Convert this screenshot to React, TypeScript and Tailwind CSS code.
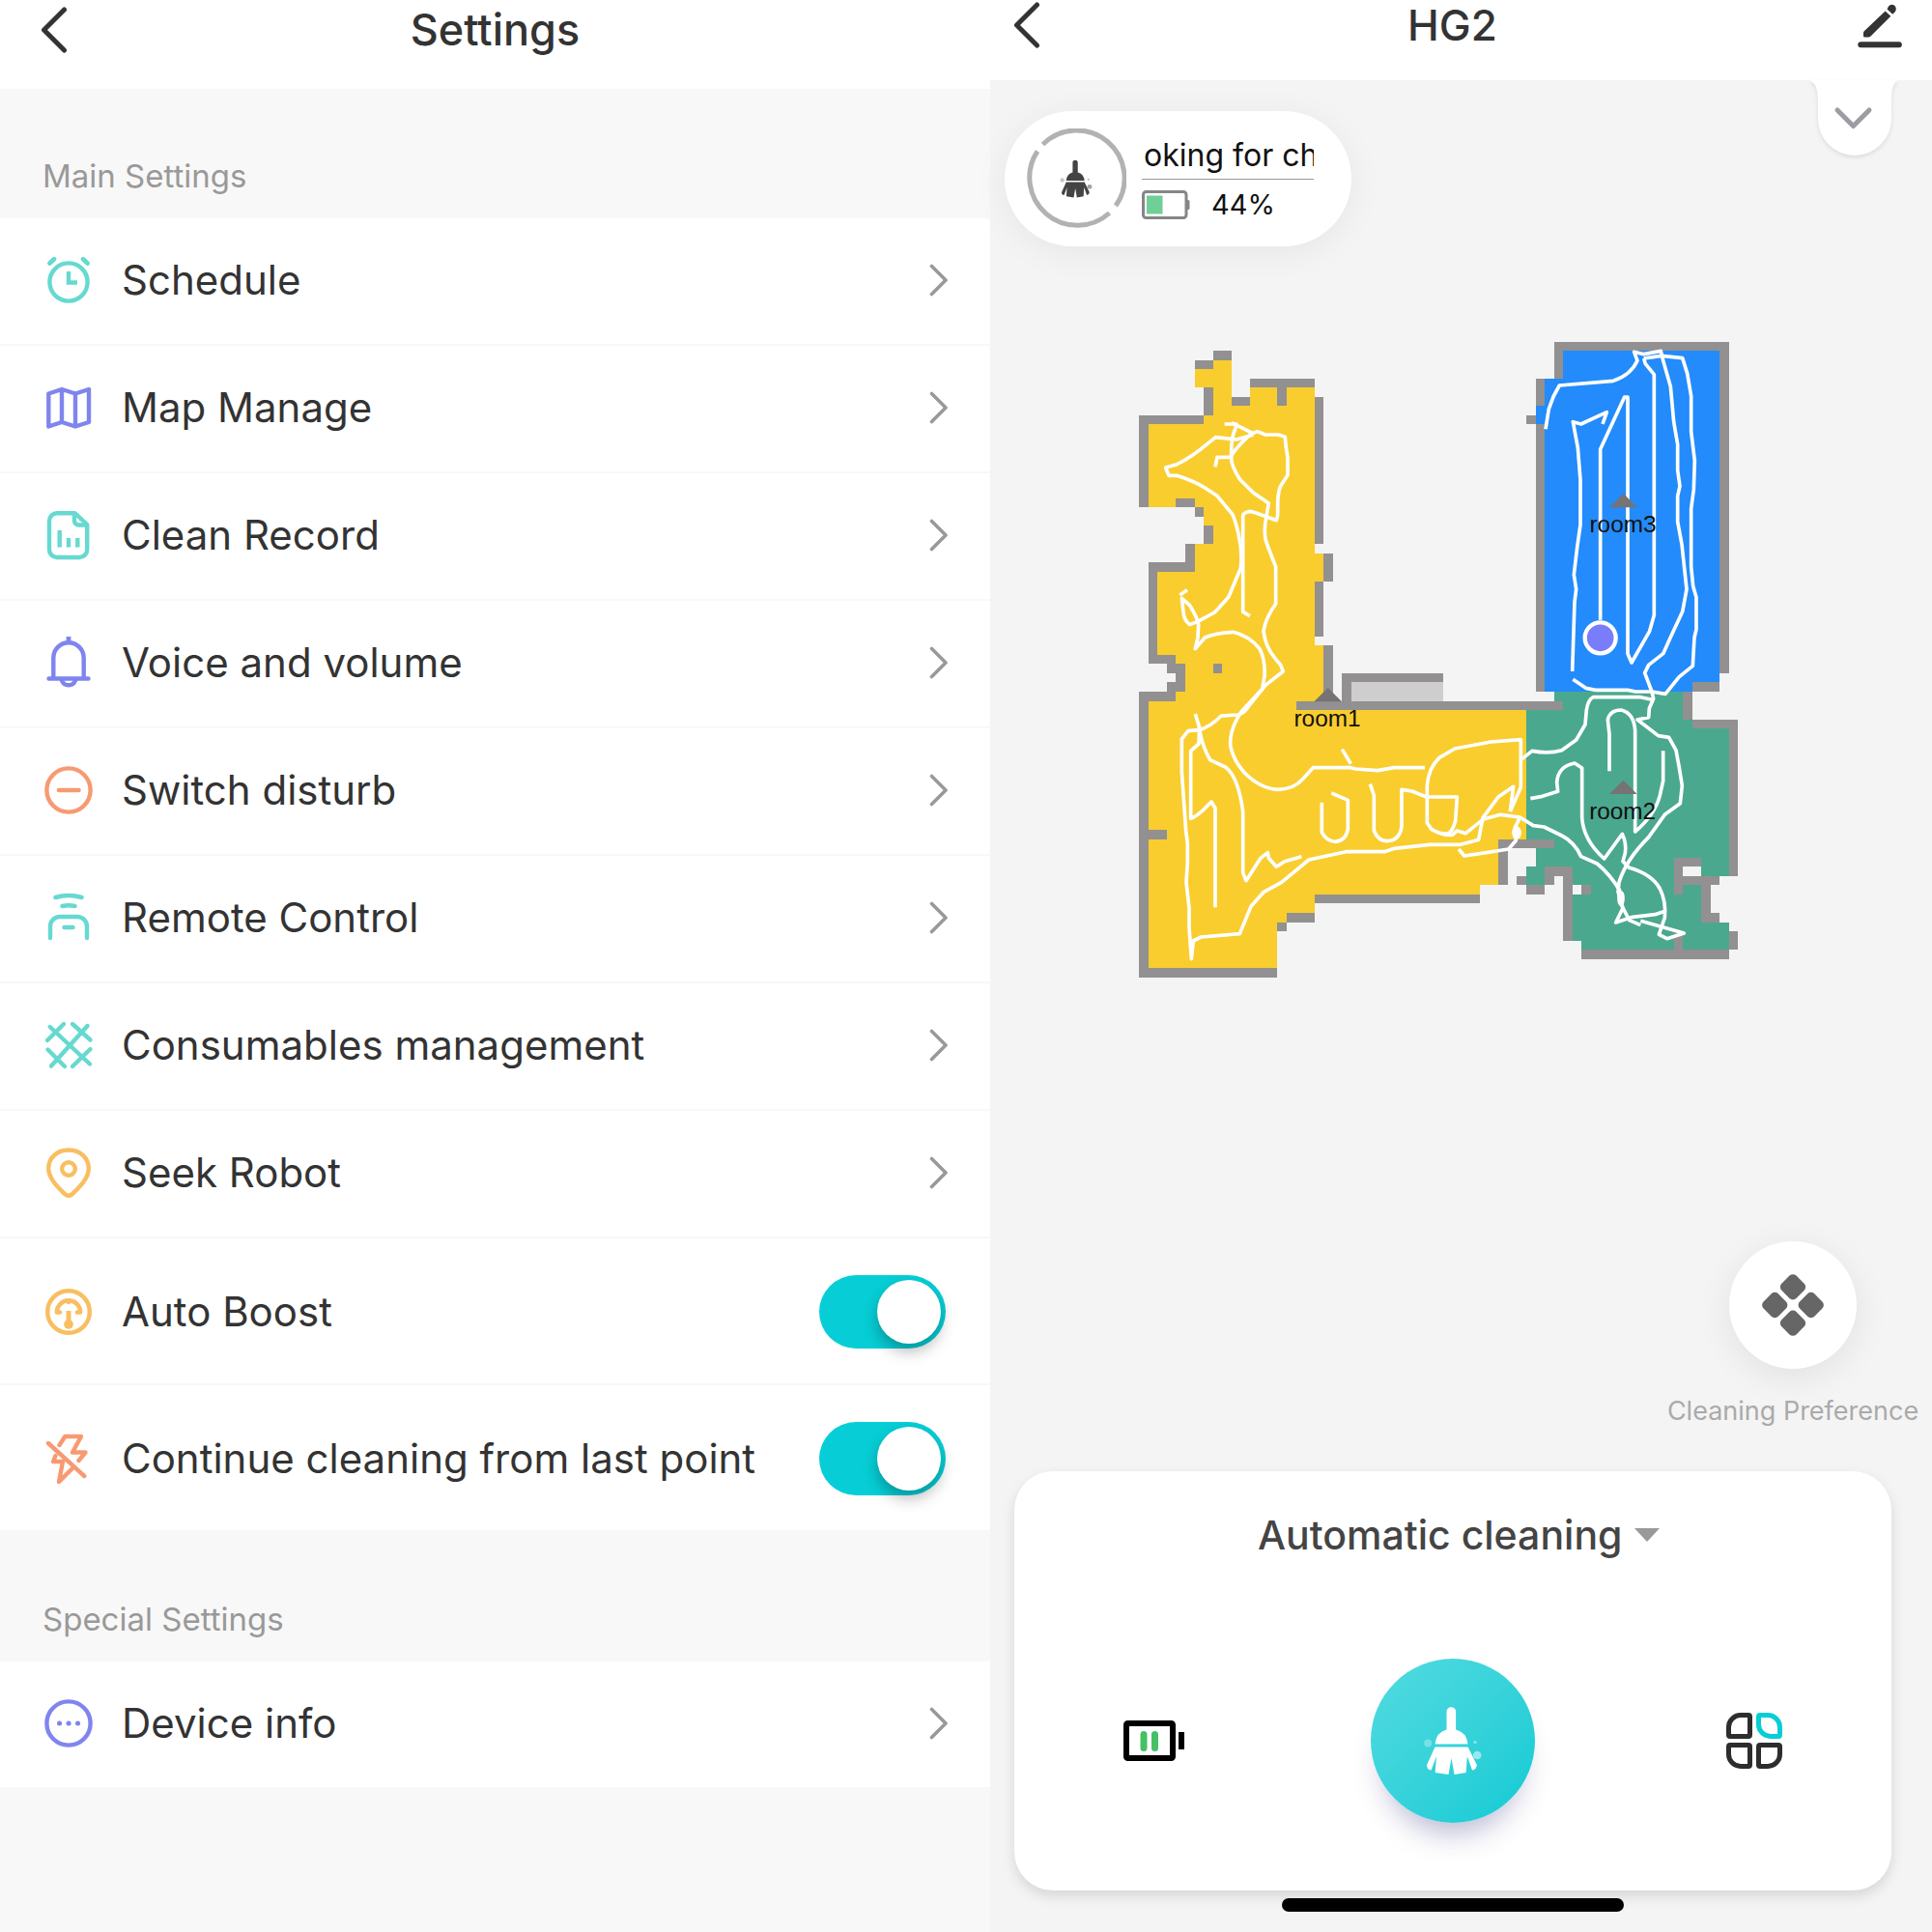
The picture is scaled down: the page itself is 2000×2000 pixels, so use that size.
import { useState, type ReactNode } from "react";

const TEAL = "#66d9d0";
const PURPLE = "#7f85ee";
const ORANGE = "#f79a72";
const AMBER = "#f8be60";

function RowIcon({ color, children }: { color: string; children: ReactNode }) {
  return (
    <svg
      viewBox="0 0 50 50"
      className="h-[50px] w-[50px] shrink-0 overflow-visible"
      fill="none"
      stroke={color}
      strokeWidth="4.4"
      strokeLinecap="round"
      strokeLinejoin="round"
      aria-hidden="true"
    >
      {children}
    </svg>
  );
}

const links = [
  {
    label: "Schedule",
    icon: (
      <RowIcon color={TEAL}>
        <circle cx="25" cy="27" r="19.6" />
        <path d="M5.5 7.5L10 3.2M40 3.2L44.5 7.5" strokeWidth="4.8" />
        <path d="M25 16V27.5H34" strokeLinecap="butt" strokeLinejoin="miter" />
      </RowIcon>
    ),
  },
  {
    label: "Map Manage",
    icon: (
      <RowIcon color={PURPLE}>
        <path d="M4.3 10.5L18 6L32 10.5L46 6V40L32 44.5L18 40L4.3 44.5ZM18 6V40M32 10.5V44.5" />
      </RowIcon>
    ),
  },
  {
    label: "Clean Record",
    icon: (
      <RowIcon color={TEAL}>
        <path d="M13 2.2H31.5L44.2 14V40a8 8 0 0 1-8 8H13a8 8 0 0 1-8-8V10.2a8 8 0 0 1 8-8Z" />
        <path d="M31 3V10a4.500 4.500 0 0 0 4.500 4.500H43.5" />
        <path d="M15.700 20V37.500M25 28V37.500M34.300 28V37.500" strokeLinecap="butt" />
      </RowIcon>
    ),
  },
  {
    label: "Voice and volume",
    icon: (
      <RowIcon color={PURPLE}>
        <path d="M9.3 41V20a15.7 15.7 0 0 1 31.4 0V41M4.5 41.5H45.5M18 43.5a7.5 7.5 0 0 0 14 0" />
        <path d="M25 -2V4" strokeWidth="4.8" strokeLinecap="butt" />
      </RowIcon>
    ),
  },
  {
    label: "Switch disturb",
    icon: (
      <RowIcon color={ORANGE}>
        <circle cx="25" cy="25" r="22.6" />
        <path d="M15 25H35.500" strokeWidth="4.6" />
      </RowIcon>
    ),
  },
  {
    label: "Remote Control",
    icon: (
      <RowIcon color={TEAL}>
        <path d="M11.500 4Q25 0 38.500 4M18.500 13Q25 11.500 31.500 13" strokeWidth="4.6" />
        <path d="M6 46V34a10 10 0 0 1 10-10H34a10 10 0 0 1 10 10V46M20.500 35H29.500" />
      </RowIcon>
    ),
  },
  {
    label: "Consumables management",
    icon: (
      <RowIcon color={TEAL}>
        <path d="M5.700 6L47 44.500M44.500 5L7 46.500M20 3L3 20M29 3L47.500 19.500M3.500 29.500L21 47M47.500 29L29 47" />
      </RowIcon>
    ),
  },
  {
    label: "Seek Robot",
    icon: (
      <RowIcon color={AMBER}>
        <path d="M25 1.500C12.500 1.500 4.200 10 4.200 20.500C4.200 31 14 40 21 47Q25 50.500 29 47C36 40 45.800 31 45.800 20.500C45.800 10 37.500 1.500 25 1.500Z" />
        <circle cx="25" cy="21" r="6.800" />
      </RowIcon>
    ),
  },
];

const toggles = [
  {
    id: "auto-boost",
    label: "Auto Boost",
    icon: (
      <RowIcon color={AMBER}>
        <circle cx="25" cy="25" r="21.800" />
        <path d="M16 25.500H12.800a12.200 12.200 0 0 1 24.400 0H34M25 13.500V15" />
        <path d="M25 24V38" strokeWidth="5" strokeLinecap="butt" />
        <circle cx="25" cy="38" r="4.800" fill={AMBER} stroke="none" />
      </RowIcon>
    ),
  },
  {
    id: "continue-cleaning",
    label: "Continue cleaning from last point",
    icon: (
      <RowIcon color={ORANGE}>
        <path d="M15.500 11L21.300 2H38L29 18.500H42.500L35.500 27M11.500 22L9 28H19L15 49L29 35" />
        <path d="M4 9L41.300 43" />
      </RowIcon>
    ),
  },
];

function ChevronRight() {
  return (
    <svg viewBox="0 0 20 34" className="h-[34px] w-5 shrink-0" fill="none" aria-hidden="true">
      <path d="M2.500 2.500L17 17L2.500 31.500" stroke="#999" strokeWidth="3.600" strokeLinecap="round" strokeLinejoin="round" />
    </svg>
  );
}

function BackButton() {
  return (
    <button type="button" aria-label="Back" className="justify-self-start">
      <svg viewBox="0 0 28 48" className="h-12 w-7" fill="none" aria-hidden="true">
        <path d="M24.500 3L3.500 24L24.500 45" stroke="#333" strokeWidth="5" strokeLinecap="round" strokeLinejoin="round" />
      </svg>
    </button>
  );
}

function LinkRow({ label, icon }: { label: string; icon: ReactNode }) {
  return (
    <li className="h-[132px] border-b-2 border-[#f8f8f8]">
      <button
        type="button"
        className="flex h-full w-full items-center gap-[30px] pb-[2px] pr-[43px] pl-[46px] text-left text-[42px] leading-[52px]"
      >
        {icon}
        <span className="flex-1">{label}</span>
        <ChevronRight />
      </button>
    </li>
  );
}

function ToggleRow({ id, label, icon }: { id: string; label: string; icon: ReactNode }) {
  const [on, setOn] = useState(true);

  return (
    <li className="flex h-[152px] items-center gap-[30px] border-b-2 border-[#f8f8f8] px-[46px] pt-[2px] text-[42px] leading-[52px]">
      {icon}
      <label htmlFor={id} className="flex-1">
        {label}
      </label>
      <input
        id={id}
        type="checkbox"
        role="switch"
        checked={on}
        onChange={(e) => setOn(e.target.checked)}
        className="flex h-[76px] w-[131px] shrink-0 appearance-none items-center rounded-full bg-gray-300 px-[5px] before:size-[66px] before:rounded-full before:bg-white before:shadow-[0_8px_16px_rgba(0,0,0,0.28)] checked:bg-[#07ced6] checked:before:ml-auto"
      />
    </li>
  );
}

function SectionTitle({ children }: { children: ReactNode }) {
  return (
    <h2 className="flex h-[134px] items-end px-11 pb-6 text-[33px] leading-10 text-[#999]">
      {children}
    </h2>
  );
}

function SettingsScreen() {
  return (
    <section className="bg-[#f8f8f8] text-[#333]">
      <header className="grid h-[92px] grid-cols-[1fr_auto_1fr] items-center bg-white px-[42px] pb-[30px]">
        <BackButton />
        <h1 className="text-[45px] leading-[52px] font-medium">Settings</h1>
      </header>

      <SectionTitle>Main Settings</SectionTitle>
      <ul className="bg-white">
        {links.map((l) => (
          <LinkRow key={l.label} label={l.label} icon={l.icon} />
        ))}
        {toggles.map((t) => (
          <ToggleRow key={t.id} id={t.id} label={t.label} icon={t.icon} />
        ))}
      </ul>

      <SectionTitle>Special Settings</SectionTitle>
      <ul className="bg-white">
        <LinkRow
          label="Device info"
          icon={
            <RowIcon color={PURPLE}>
              <circle cx="25" cy="25" r="22.600" />
              <path d="M15.500 25H15.600M25 25H25.100M34.500 25H34.600" strokeWidth="5" />
            </RowIcon>
          }
        />
      </ul>
    </section>
  );
}

function Broom({ className }: { className: string }) {
  return (
    <svg viewBox="0 0 60 72" className={className} fill="currentColor" aria-hidden="true">
      <path d="M23.500 6a4.800 4.800 0 0 1 9.600 0V24.500Q44 27 45.600 39.500H11.500Q13 27 23.500 24.500Z" />
      <path d="M11.500 42.500H45.600L54.800 61Q54.500 66 50 66.500L44.800 52L43.700 69L31.500 71L28.500 54L25.500 71L11.700 69L13 52L7.500 66.500Q3 66 3 61Z" />
      <circle cx="4.200" cy="38.500" r="4" opacity="0.3" />
      <circle cx="53" cy="37.500" r="1.800" opacity="0.4" />
      <circle cx="55.200" cy="51" r="4.300" opacity="0.5" />
    </svg>
  );
}

// [x, y, width, height] in map cells
const walls = [
  [8, 1, 2, 1], [6, 2, 2, 1], [7, 5, 1, 3], [10, 6, 2, 1], [12, 4, 7, 1],
  [15, 5, 1, 2], [19, 6, 1, 16], [20, 23, 1, 3], [19, 26, 1, 6], [20, 33, 1, 6],
  [17, 39, 29, 1], [39, 54, 6, 1], [39, 54, 1, 5], [19, 60, 18, 1], [16, 62, 3, 1],
  [15, 63, 1, 1], [0, 68, 15, 1], [0, 38, 1, 31], [0, 38, 4, 1], [1, 53, 2, 1],
  [3, 37, 2, 1], [4, 35, 1, 3], [3, 35, 2, 1], [1, 34, 3, 1], [1, 24, 1, 11],
  [1, 24, 5, 1], [5, 22, 1, 3], [7, 20, 1, 2], [6, 18, 1, 1], [4, 17, 2, 1],
  [0, 8, 1, 10], [0, 8, 7, 1], [8, 35, 1, 1], [22, 36, 11, 1], [22, 36, 1, 3],
  [45, 0, 19, 1], [45, 0, 1, 4], [43, 4, 1, 3], [42, 8, 1, 1], [43, 9, 1, 29],
  [63, 0, 1, 36], [60, 37, 3, 1], [59, 38, 1, 3], [60, 41, 5, 1], [64, 41, 1, 17],
  [41, 58, 1, 1], [42, 59, 2, 1], [44, 57, 3, 1], [44, 57, 1, 2], [46, 57, 1, 8],
  [48, 59, 1, 1], [48, 66, 16, 1], [64, 64, 1, 2], [58, 64, 1, 2], [58, 56, 3, 1],
  [58, 56, 1, 4], [59, 58, 4, 1], [61, 58, 1, 5], [61, 62, 2, 1],
];

const rooms = [
  { name: "room1", x: 644, y: 1116 },
  { name: "room2", x: 1561, y: 1403 },
  { name: "room3", x: 1562, y: 513 },
];

function FloorMap() {
  return (
    <svg
      viewBox="0 0 1980 2070"
      className="mt-[85px] ml-[135px] w-[660px]"
      role="img"
      aria-label="Cleaning map"
    >
      <g transform="translate(58 40.5) scale(28.62)" shapeRendering="crispEdges">
        <path
          fill="#f9cd2e"
          d="M8 2H10V7H12V5H19V23H20V26H19V33H20V39H42V54H39V59H37V60H19V62H16V63H15V68H1V38H5V35H4V34H2V25H6V22H8V20H7V18H1V9H7V8H8V5H6V3H8Z"
        />
        <path fill="#238bfb" d="M46 1H63V37H60V38H44V9H43V7H44V4H46Z" />
        <path
          fill="#4aa88e"
          d="M45 38H59V41H60V42H64V58H61V63H64V66H48V65H46V57H44V59H42V57H43V54H42V40H45Z"
        />
        <path fill="#cecece" d="M23 37H33V39H23Z" />
        <path fill="#f4f4f4" d="M47 59H48V60H47ZM59 57H61V58H59Z" />
        {walls.map(([x, y, w, h]) => (
          <rect key={`${x}-${y}-${w}-${h}`} x={x} y={y} width={w} height={h} fill="#929090" />
        ))}
      </g>

      <g fill="none" stroke="#fff" strokeWidth="11" strokeLinejoin="round">
        {/* room1 */}
        <path d="M323 297H360L357 310Q340 345 345 415Q352 440 370 468L412 510L460 543L452 590Q445 620 450 655Q458 680 482 740V855Q450 900 444 940Q450 990 480 1025L497 1045L505 1065L450 1108L400 1170Q385 1195 365 1200L313 1203Q275 1240 243 1247L210 1250L190 1275V1375L203 1560L208 1600V1660L204 1720L213 1800V1860L220 1958L226 1902L250 1890L370 1880L405 1795L445 1750L500 1720L585 1650L700 1625H820L850 1615L960 1603H1055L1112 1588L1125 1520L1173 1455L1220 1423L1210 1500" />
        <path d="M345 293L410 325Q375 350 340 400H300L294 430" />
        <path d="M400 330L425 320L450 330H490L511 337Q512 360 519 400V455L497 490Q488 510 488 545V580L484 596L440 580Q415 570 402 568Q380 572 380 582V880L402 893" />
        <path d="M412 330L360 345L295 338L270 358Q220 400 175 422L140 432L150 457H175Q230 475 262 495L300 520L348 578Q362 610 370 660Q378 700 373 745L335 835L292 882L240 910L215 920Q196 905 195 880L190 838L215 860Q240 900 242 920L240 960L232 995L262 960Q300 945 350 943Q400 955 432 995Q450 1030 447 1080L440 1120L375 1190Q335 1250 342 1300Q350 1340 385 1380Q435 1430 490 1432Q540 1430 565 1400L598 1364H715L730 1368L798 1373L850 1364H945" />
        <path d="M184 828L207 812" />
        <path d="M232 1197L245 1240L243 1290L218 1312V1522Q240 1515 282 1470L294 1490V1798" />
        <path d="M245 1240Q250 1290 278 1340L325 1362Q365 1390 380 1500V1690L390 1715L435 1645L457 1628L460 1645L484 1672L510 1655L562 1640" />
        <path d="M688 1307L715 1352" />
        <path d="M625 1472V1565Q640 1593 667 1594Q700 1590 706 1555V1465L655 1443" />
        <path d="M775 1415L787 1450V1560Q800 1592 828 1592Q868 1590 873 1545V1432L905 1437L950 1455H1045L1040 1530Q1030 1565 1015 1570L995 1568" />
        <path d="M1210 1500L1243 1425V1277L1150 1284L1038 1305L990 1333Q956 1365 952 1420V1535L965 1555Q1000 1575 1030 1573L1045 1560L1072 1568L1125 1525L1180 1510L1240 1518L1282 1544L1315 1548L1370 1575Q1410 1595 1430 1640L1480 1662Q1520 1695 1550 1745L1555 1790L1580 1838L1615 1853" />
        <path d="M1050 1617L1068 1638L1205 1617L1228 1590L1225 1550L1242 1515" />
        <ellipse cx="1230" cy="1566" rx="9" ry="15" fill="#fff" />
        {/* room2 */}
        <path d="M1243 1340L1278 1312Q1330 1322 1370 1310L1415 1278L1443 1230L1447 1185Q1452 1152 1468 1145H1615L1650 1153" />
        <path d="M1273 1460L1310 1453L1358 1438L1355 1410Q1358 1360 1410 1350L1433 1365V1520Q1438 1590 1502 1647L1558 1570Q1572 1600 1567 1630L1560 1655L1580 1675Q1650 1695 1675 1740Q1695 1780 1690 1830L1672 1882L1697 1895L1750 1878L1615 1840" />
        <path d="M1518 1375V1260L1513 1215Q1520 1185 1555 1185Q1595 1195 1598 1250V1563Q1660 1510 1675 1450L1685 1405V1312" />
        <path d="M1650 1128L1655 1150L1642 1180L1640 1208L1605 1215L1670 1265L1703 1270L1725 1310Q1735 1360 1744 1420L1738 1475L1690 1510L1640 1580Q1570 1650 1548 1720L1545 1750L1560 1800L1538 1845L1590 1828L1660 1820L1690 1810" />
        <ellipse cx="1554" cy="1770" rx="6" ry="18" fill="#fff" />
        {/* room3 */}
        <path d="M1320 313L1330 250L1345 210L1363 177L1530 163Q1585 145 1605 100L1595 73L1625 80L1678 70L1685 100L1708 180L1718 290L1730 360V440L1737 490L1730 520V600L1743 670L1758 810L1745 880L1710 955L1685 1010L1640 1045L1628 1070L1650 1128" />
        <path d="M1625 93L1680 85L1745 92L1760 140L1772 210V320L1783 410L1780 500L1772 560V740L1778 800L1788 835V935L1782 960L1777 1048L1735 1082L1692 1135L1650 1128H1600L1575 1123H1475L1445 1117L1405 1090" />
        <path d="M1625 93L1630 110L1657 143V890L1643 940L1587 1038L1575 1010V213H1565L1490 375V905" />
        <path d="M1403 1065L1410 850L1415 810L1408 765L1418 680L1428 610V470L1420 370L1405 290L1430 297L1510 260L1497 297" />
      </g>

      <circle cx="1490" cy="961" r="48" fill="#7a7dfa" stroke="#fff" strokeWidth="13" />

      {rooms.map((r) => (
        <g key={r.name}>
          <path d={`M${r.x} ${r.y}l43 43h-86z`} fill="#757373" />
          <text
            x={r.x - 2}
            y={r.y + 120}
            textAnchor="middle"
            fontSize="73"
            fontFamily='"Liberation Sans", Arial, sans-serif'
            fill="#111"
          >
            {r.name}
          </text>
        </g>
      ))}
    </svg>
  );
}

function StatusPill() {
  return (
    <div className="mt-8 ml-[15px] flex h-[140px] w-[359px] items-center gap-4 rounded-full bg-white pr-[39px] pl-[22px] shadow-[0_6px_36px_rgba(0,0,0,0.06)]">
      <div className="grid shrink-0 place-items-center">
        <svg viewBox="0 0 104 104" className="col-start-1 row-start-1 size-[104px]" fill="none" stroke="#b2b2b2" strokeWidth="5" aria-hidden="true">
          <path d="M17.500 16.500A49.500 49.500 0 0 1 93 80" />
          <path d="M86.500 87.500A49.500 49.500 0 0 1 12 23.500" />
        </svg>
        <Broom className="col-start-1 row-start-1 h-10 w-[34px] text-[#444]" />
      </div>
      <div className="min-w-0 flex-1 text-[#111]">
        <div className="flex h-[46px] items-center overflow-hidden border-b border-[#999] pb-1 pl-0.5 text-[32px] leading-10 whitespace-nowrap">
          oking for ch
        </div>
        <div className="flex items-center gap-[22px] pt-2">
          <svg viewBox="0 0 50 30" className="h-[30px] w-[50px]" aria-hidden="true">
            <rect x="1.500" y="1.500" width="44.500" height="27" rx="3" fill="#fff" stroke="#868686" strokeWidth="3" />
            <path d="M47 10h1a1.500 1.500 0 0 1 1.500 1.500v7a1.500 1.500 0 0 1-1.500 1.500h-1z" fill="#868686" />
            <rect x="5" y="5.500" width="16.500" height="19" fill="#6fcf97" />
          </svg>
          <span className="text-[29px] leading-9">44%</span>
        </div>
      </div>
    </div>
  );
}

function ControlCard() {
  return (
    <div className="mt-[46px] rounded-[40px] bg-white px-[113px] pt-10 pb-[70px] shadow-[0_6px_14px_rgba(0,0,0,0.12)]">
      <div className="flex items-center justify-center gap-3 pl-3">
        <select
          aria-label="Cleaning mode"
          className="appearance-none bg-transparent text-[41px] leading-[52px] font-medium text-[#444]"
        >
          <option>Automatic cleaning</option>
        </select>
        <svg viewBox="0 0 26 14" className="h-[14px] w-[26px]" aria-hidden="true">
          <path d="M0 0H26L13 14Z" fill="#999" />
        </svg>
      </div>

      <div className="mt-[102px] flex items-center justify-between">
        <button type="button" aria-label="Charge" className="w-[58px]">
          <svg viewBox="0 0 64 42" className="h-[42px] w-16 max-w-none" aria-hidden="true">
            <rect x="3" y="3" width="48" height="36" rx="1.500" fill="none" stroke="#000" strokeWidth="6" />
            <path d="M57 12H63V30H57Z" fill="#000" />
            <path d="M21 14.500V28.500M32.500 14.500V28.500" stroke="#45c065" strokeWidth="7" strokeLinecap="round" />
          </svg>
        </button>
        <button
          type="button"
          aria-label="Start cleaning"
          className="grid size-[170px] place-items-center rounded-full bg-linear-to-br from-[#50dbe0] to-[#06cad5] text-white shadow-[0_24px_30px_-14px_rgba(50,50,130,0.35)]"
        >
          <Broom className="h-[72px] w-[60px]" />
        </button>
        <button type="button" aria-label="More modes">
          <svg viewBox="0 0 58 58" className="size-[58px]" fill="none" stroke="#2d2d2d" strokeWidth="5" aria-hidden="true">
            <path d="M15 2.500H23a1.500 1.500 0 0 1 1.500 1.500V23a1.500 1.500 0 0 1-1.500 1.500H4a1.500 1.500 0 0 1-1.500-1.500V15A12.500 12.500 0 0 1 15 2.500Z" />
            <path d="M35 2.500H43A12.500 12.500 0 0 1 55.500 15V23a1.500 1.500 0 0 1-1.500 1.500H46A12.500 12.500 0 0 1 33.500 12V4a1.500 1.500 0 0 1 1.500-1.500Z" stroke="#07cdd5" />
            <path d="M4 33.500H23a1.500 1.500 0 0 1 1.500 1.500V54a1.500 1.500 0 0 1-1.500 1.500H15A12.500 12.500 0 0 1 2.500 43V35a1.500 1.500 0 0 1 1.500-1.500Z" />
            <path d="M35 33.500H54a1.500 1.500 0 0 1 1.500 1.500V43A12.500 12.500 0 0 1 43 55.500H35a1.500 1.500 0 0 1-1.500-1.500V35a1.500 1.500 0 0 1 1.500-1.500Z" />
          </svg>
        </button>
      </div>
    </div>
  );
}

function DeviceScreen() {
  return (
    <section className="flex flex-col bg-[#f4f4f4]">
      <header className="grid h-[83px] grid-cols-[1fr_auto_1fr] items-center bg-white pr-[42px] pb-9 pl-6 text-[#333]">
        <BackButton />
        <h1 className="text-[44px] leading-[52px] font-medium">HG2</h1>
        <button type="button" aria-label="Rename" className="-mr-3 justify-self-end">
          <svg viewBox="0 0 48 48" className="size-12" fill="#333" aria-hidden="true">
            <path d="M29.600 9.500L35.300 14.800L14.500 35.500Q13.500 36.500 12 36.500H8.500Q7 36.500 7 35V32Q7 31 8 30Z" />
            <path d="M31.500 7.500L33 4.500Q35.500 1.500 39 3.500Q42 6.500 40 10L37.200 12.800Z" />
            <rect x="1.300" y="41.300" width="45.500" height="6" rx="3" />
          </svg>
        </button>
      </header>

      <div className="flex items-start justify-between pr-[35px]">
        <StatusPill />
        <button type="button" aria-label="Expand">
          <svg viewBox="0 0 92 80" className="h-20 w-[92px] overflow-visible drop-shadow-[0_2px_2px_rgba(0,0,0,0.1)]" aria-hidden="true">
            <path d="M0 0C7 3 9 10 9 24V40a38 38 0 0 0 76 0V24C85 10 86 3 92 0Z" fill="#fff" />
            <path d="M29 31L45.500 47.500L62 31" fill="none" stroke="#9c9ca4" strokeWidth="5" strokeLinecap="round" strokeLinejoin="round" />
          </svg>
        </button>
      </div>

      <FloorMap />

      <div className="mt-auto flex w-72 flex-col items-center gap-7 self-end">
        <button
          type="button"
          aria-labelledby="pref-label"
          className="grid size-[132px] place-items-center rounded-full bg-white shadow-[0_8px_36px_rgba(0,0,0,0.08)]"
        >
          <svg viewBox="-32 -32 64 64" className="size-16" fill="#666" aria-hidden="true">
            <g transform="rotate(45)">
              <rect x="-24" y="-24" width="21.500" height="21.500" rx="5" />
              <rect x="2.500" y="-24" width="21.500" height="21.500" rx="5" />
              <rect x="-24" y="2.500" width="21.500" height="21.500" rx="5" />
              <rect x="2.500" y="2.500" width="21.500" height="21.500" rx="5" />
            </g>
          </svg>
        </button>
        <span id="pref-label" className="text-[27px] leading-8 whitespace-nowrap text-[#aaa]">
          Cleaning Preference
        </span>
      </div>

      <div className="flex flex-col pr-[42px] pb-[21px] pl-[25px]">
        <ControlCard />
        <div className="mt-2 h-[14px] w-[354px] self-center rounded-full bg-black" />
      </div>
    </section>
  );
}

export default function App() {
  return (
    <main className='grid min-h-screen grid-cols-[41fr_39fr] font-["Inter",sans-serif]'>
      <SettingsScreen />
      <DeviceScreen />
    </main>
  );
}
